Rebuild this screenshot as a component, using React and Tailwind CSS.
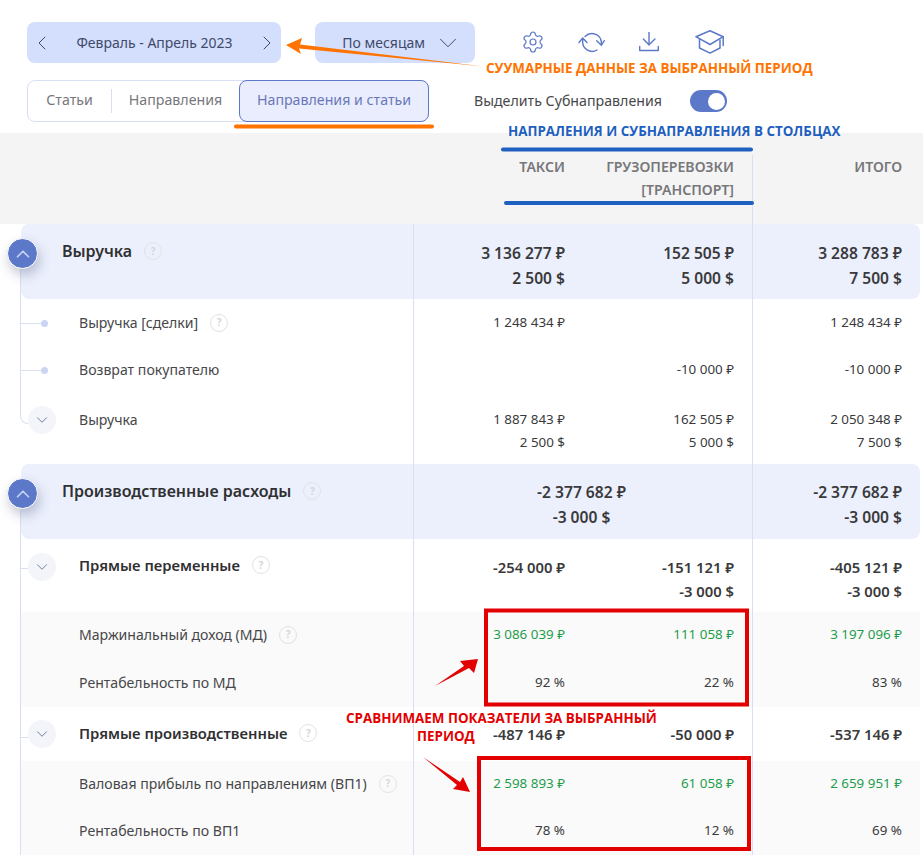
import React from "react";
import { ChevronDown, ChevronLeft, ChevronRight, ChevronUp, Settings } from "lucide-react";

function Hint() {
  return (
    <span className="ml-3 inline-flex h-[18px] w-[18px] shrink-0 items-center justify-center rounded-full border border-[#e2e2e5] text-[10px] font-bold text-[#d6d6da]">
      ?
    </span>
  );
}

function SyncIcon() {
  return (
    <svg width="27" height="22" viewBox="0 0 27 22" fill="none" stroke="#5b78c9" strokeWidth="1.4" strokeLinecap="round" strokeLinejoin="round">
      <path d="M7 5.5A9.5 9.5 0 0 1 23.3 13" />
      <path d="M18.7 9.7L23.3 14.3L26.3 9.7" />
      <path d="M4.7 8V10A9.5 9.5 0 0 0 19 19" />
      <path d="M1 11.5L4.7 7L9 11.5" />
    </svg>
  );
}

function DownloadIcon() {
  return (
    <svg width="20" height="20" viewBox="0 0 20 20" fill="none" stroke="#5b78c9" strokeWidth="1.4" strokeLinecap="round" strokeLinejoin="round">
      <path d="M.7 14.5V18.5H19.3V14.5" />
      <path d="M10 .5V12.7" />
      <path d="M4.3 7L10 12.7L16 7" />
    </svg>
  );
}

function CapIcon() {
  return (
    <svg width="29" height="24" viewBox="0 0 29 24" fill="none" stroke="#5b78c9" strokeWidth="1.5" strokeLinecap="round" strokeLinejoin="round">
      <path d="M.9 6.7L15 .8L28.2 6.7L15 14.5Z" />
      <path d="M4.5 9.5V18L15 23.2L25 18V10" />
      <path d="M28.2 6.7V15.5" />
    </svg>
  );
}

function Toggle({ dark, branch, top }) {
  if (dark) {
    return (
      <span className="absolute -left-[14px] top-[14px] z-10 flex h-[31px] w-[31px] items-center justify-center rounded-full border border-white bg-[#5b78c9] text-[#c9d4f5] shadow-[2px_6px_12px_rgba(60,70,110,0.3)]">
        <ChevronUp size={22} strokeWidth={1.8} />
      </span>
    );
  }
  return (
    <>
      {branch && <span className={`absolute left-0 z-10 h-px w-[8px] bg-[#d8dff3] ${branch}`} />}
      <span className={`absolute left-[7px] z-10 flex h-[28px] w-[28px] items-center justify-center rounded-full bg-[#f4f5fa] text-[#6c7a9c]  ${top}`}>
        <ChevronDown size={18} strokeWidth={1.3} />
      </span>
    </>
  );
}

function Cell({ lines = [], bold, green, main, divider, pt, center }) {
  const color = green ? "text-[#1f9d4d]" : "text-[#3a3a3c]";
  let type = "text-[13.4px] leading-[23px] font-normal";
  if (bold) type = "text-[14.8px] leading-[24px] font-semibold";
  if (main) type = "text-[15.6px] leading-[25px] font-semibold";
  return (
    <div className={`${pt} ${color} ${type} ${center ? "pr-[3px] text-center" : "pr-[18px] text-right"} ${divider ? "border-r border-[#d8dff3]" : ""}`}>
      {lines.map((l) => (
        <div key={l}>{l}</div>
      ))}
    </div>
  );
}

function Row({ h, pt, labelTop, label, hint, toggleTop, branch, dot, a, b, c, green, bold, tint }) {
  return (
    <div className={`relative ml-[21px] grid w-[899px] grid-cols-[393px_169px_170px_167px] ${tint ? "bg-[#fafafa]" : "bg-white"} ${h}`}>
      {toggleTop && <Toggle top={toggleTop} branch={branch} />}
      {dot && (
        <span className="absolute left-0 top-[21px] flex items-center">
          <span className="h-px w-[20px] bg-[#d8dff3]" />
          <span className="h-[7px] w-[7px] rounded-full bg-[#ccd6f3]" />
        </span>
      )}
      <div className={`flex border-r border-[#d8dff3] pl-[58px] ${labelTop}`}>
        <span className={`flex items-center self-start whitespace-nowrap ${bold ? "text-[14.8px] font-semibold text-[#303032]" : "text-[14.1px] text-[#47474a]"}`}>
          {label}
          {hint && <Hint />}
        </span>
      </div>
      <Cell pt={pt} lines={a} bold={bold} green={green} />
      <Cell pt={pt} lines={b} bold={bold} green={green} divider />
      <Cell pt={pt} lines={c} bold={bold} green={green} />
    </div>
  );
}

function MainRow({ label, a, b, c, merged }) {
  return (
    <div className={`relative ml-[21px] grid h-[75px] w-[899px] rounded-lg bg-[#ecf0fd] ${merged ? "grid-cols-[393px_339px_167px]" : "grid-cols-[393px_169px_170px_167px]"}`}>
      <Toggle dark />
      <div className="flex items-start border-r border-[#d8dff3] pl-[41px] pt-[15px]">
        <span className="flex items-center text-[16px] font-semibold text-[#303032]">
          {label}
          <Hint />
        </span>
      </div>
      {merged ? (
        <Cell pt="pt-[16px]" lines={a} main center divider />
      ) : (
        <>
          <Cell pt="pt-[17px]" lines={a} main />
          <Cell pt="pt-[17px]" lines={b} main divider />
        </>
      )}
      <Cell pt={merged ? "pt-[16px]" : "pt-[17px]"} lines={c} main />
    </div>
  );
}

function Tab({ active, children, className = "" }) {
  return (
    <div className={`flex shrink-0 items-center justify-center pb-[3px] ${active ? "rounded-lg border border-[#5b78c9] bg-[#e9edfd] text-[#6b78b8]" : "text-[#77777c]"} ${className}`}>
      {children}
    </div>
  );
}

export default function App() {
  return (
    <div className="relative h-[855px] w-[923px] overflow-hidden bg-white font-['Noto_Sans',sans-serif]">
      {/* toolbar */}
      <div className="flex items-center pl-[27px] pt-[22px]">
        <div className="flex h-[41px] w-[254px] items-center justify-between rounded-lg bg-[#d4defd] pl-[3px] pr-[2px] text-[14px] text-[#3f4a6b]">
          <ChevronLeft size={24} strokeWidth={1} />
          <span>Февраль - Апрель 2023</span>
          <ChevronRight size={24} strokeWidth={1} />
        </div>
        <div className="ml-[34px] flex h-[41px] w-[160px] items-center justify-end gap-[8px] rounded-lg bg-[#d4defd] pr-[12px] text-[14px] text-[#3f4a6b]">
          <span>По месяцам</span>
          <ChevronDown size={30} strokeWidth={0.8} />
        </div>
        <div className="ml-[46px] flex items-center">
          <Settings className="-mt-[2px]" size={24} strokeWidth={1.2} color="#5b78c9" />
          <span className="ml-[33px] -mt-[1px]"><SyncIcon /></span>
          <span className="ml-[34px] -mt-[1px]"><DownloadIcon /></span>
          <span className="ml-[36px] -mt-[1px]"><CapIcon /></span>
        </div>
      </div>

      <div className="mt-[17px] flex items-center pl-[27px]">
        <div className="flex h-[42px] w-[402px] rounded-lg border border-[#d8dff3] text-[14.2px]">
          <Tab className="w-[83px]">Статьи</Tab>
          <span className="my-[8px] w-px bg-[#d8dff3]" />
          <Tab className="w-[127px]">Направления</Tab>
          <Tab active className="-my-px -mr-px w-[190px]">Направления и статьи</Tab>
        </div>
        <span className="ml-[45px] pb-[1px] text-[14.2px] text-[#47474a]">Выделить Субнаправления</span>
        <span className="ml-[28px] flex h-[22px] w-[37px] items-center justify-end rounded-full bg-[#5b78c9] pr-[2px]">
          <span className="h-[17px] w-[17px] rounded-full bg-white" />
        </span>
      </div>

      {/* table head */}
      <div className="mt-[11px] grid h-[91px] w-[923px] grid-cols-[414px_169px_170px_170px] bg-[#f4f4f5] pt-[22px] text-[14.1px] font-semibold leading-[23px] text-[#77777a]">
        <div />
        <div className="pr-[18px] text-right">ТАКСИ</div>
        <div className="border-r border-[#d8dff3] pr-[18px] text-right">
          ГРУЗОПЕРЕВОЗКИ
          <br />
          [ТРАНСПОРТ]
        </div>
        <div className="pr-[21px] text-right">ИТОГО</div>
      </div>

      {/* table body */}
      <div className="relative">
        <span className="absolute left-[20px] top-[45px] z-10 h-[155px] w-[8px] rounded-bl-lg border-b border-l border-[#d8dff3]" />
        <span className="absolute left-[20px] top-[286px] z-10 h-[345px] w-px bg-[#d8dff3]" />

        <MainRow label="Выручка" a={["3 136 277 ₽", "2 500 $"]} b={["152 505 ₽", "5 000 $"]} c={["3 288 783 ₽", "7 500 $"]} />
        <Row h="h-[47px]" pt="pt-[12px]" labelTop="pt-[13px]" label="Выручка [сделки]" hint dot a={["1 248 434 ₽"]} c={["1 248 434 ₽"]} />
        <Row h="h-[47px]" pt="pt-[12px]" labelTop="pt-[13px]" label="Возврат покупателю" dot b={["-10 000 ₽"]} c={["-10 000 ₽"]} />
        <Row h="h-[71px]" pt="pt-[15px]" labelTop="pt-[16px]" label="Выручка" toggleTop="top-[13px]" a={["1 887 843 ₽", "2 500 $"]} b={["162 505 ₽", "5 000 $"]} c={["2 050 348 ₽", "7 500 $"]} />
        <MainRow merged label="Производственные расходы" a={["-2 377 682 ₽", "-3 000 $"]} c={["-2 377 682 ₽", "-3 000 $"]} />
        <Row h="h-[73px]" pt="pt-[16px]" labelTop="pt-[15px]" label="Прямые переменные" hint bold toggleTop="top-[14px]" branch="top-[29px]" a={["-254 000 ₽"]} b={["-151 121 ₽", "-3 000 $"]} c={["-405 121 ₽", "-3 000 $"]} />
        <Row tint h="h-[47px]" pt="pt-[11px]" labelTop="pt-[12px]" label="Маржинальный доход (МД)" hint green a={["3 086 039 ₽"]} b={["111 058 ₽"]} c={["3 197 096 ₽"]} />
        <Row tint h="h-[48px]" pt="pt-[12px]" labelTop="pt-[13px]" label="Рентабельность по МД" a={["92 %"]} b={["22 %"]} c={["83 %"]} />
        <Row h="h-[54px]" pt="pt-[15px]" labelTop="pt-[15px]" label="Прямые производственные" hint bold toggleTop="top-[13px]" branch="top-[30px]" a={["-487 146 ₽"]} b={["-50 000 ₽"]} c={["-537 146 ₽"]} />
        <Row tint h="h-[47px]" pt="pt-[11px]" labelTop="pt-[12px]" label="Валовая прибыль по направлениям (ВП1)" hint green a={["2 598 893 ₽"]} b={["61 058 ₽"]} c={["2 659 951 ₽"]} />
        <Row tint h="h-[47px]" pt="pt-[11px]" labelTop="pt-[12px]" label="Рентабельность по ВП1" a={["78 %"]} b={["12 %"]} c={["69 %"]} />
      </div>

      {/* annotations drawn over the screenshot */}
      <svg className="pointer-events-none absolute left-0 top-0 z-20" width="923" height="855" viewBox="0 0 923 855">
        <polygon points="286,45 302,38 300,44.5 484,66.5 299,48.5 301,54" fill="#ff7300" />
        <rect x="234" y="124.5" width="200" height="4" rx="2" fill="#ff7300" />
        <rect x="501" y="147.5" width="252" height="4" rx="2" fill="#1f5fbf" />
        <rect x="504" y="201" width="250" height="4" rx="2" fill="#1f5fbf" />
        <rect x="486" y="610.5" width="261" height="94" fill="none" stroke="#e30000" strokeWidth="4" />
        <rect x="479" y="758" width="270" height="91" fill="none" stroke="#e30000" strokeWidth="4" />
        <polygon points="435,686 464,666 460,661 478,659 474,673 469,668" fill="#e30000" />
        <polygon points="423,757 460,782 463,777 470,792 453,789 457,785" fill="#e30000" />
      </svg>
      <div className="absolute left-[486px] top-[59px] z-30 whitespace-nowrap font-['Open_Sans',sans-serif] text-[13.4px] font-bold leading-[19px] text-[#ff7300]">
        СУУМАРНЫЕ ДАННЫЕ ЗА ВЫБРАННЫЙ ПЕРИОД
      </div>
      <div className="absolute left-[508px] top-[122px] z-30 whitespace-nowrap font-['Open_Sans',sans-serif] text-[13.4px] font-bold leading-[19px] text-[#1f5fbf]">
        НАПРАЛЕНИЯ И СУБНАПРАВЛЕНИЯ В СТОЛБЦАХ
      </div>
      <div className="absolute left-[346px] top-[709px] z-30 w-[312px] whitespace-nowrap font-['Open_Sans',sans-serif] text-[13.4px] font-bold leading-[18px] text-[#e30000]">
        <div>СРАВНИМАЕМ ПОКАЗАТЕЛИ ЗА ВЫБРАННЫЙ</div>
        <div className="ml-[71px]">ПЕРИОД</div>
      </div>
    </div>
  );
}
